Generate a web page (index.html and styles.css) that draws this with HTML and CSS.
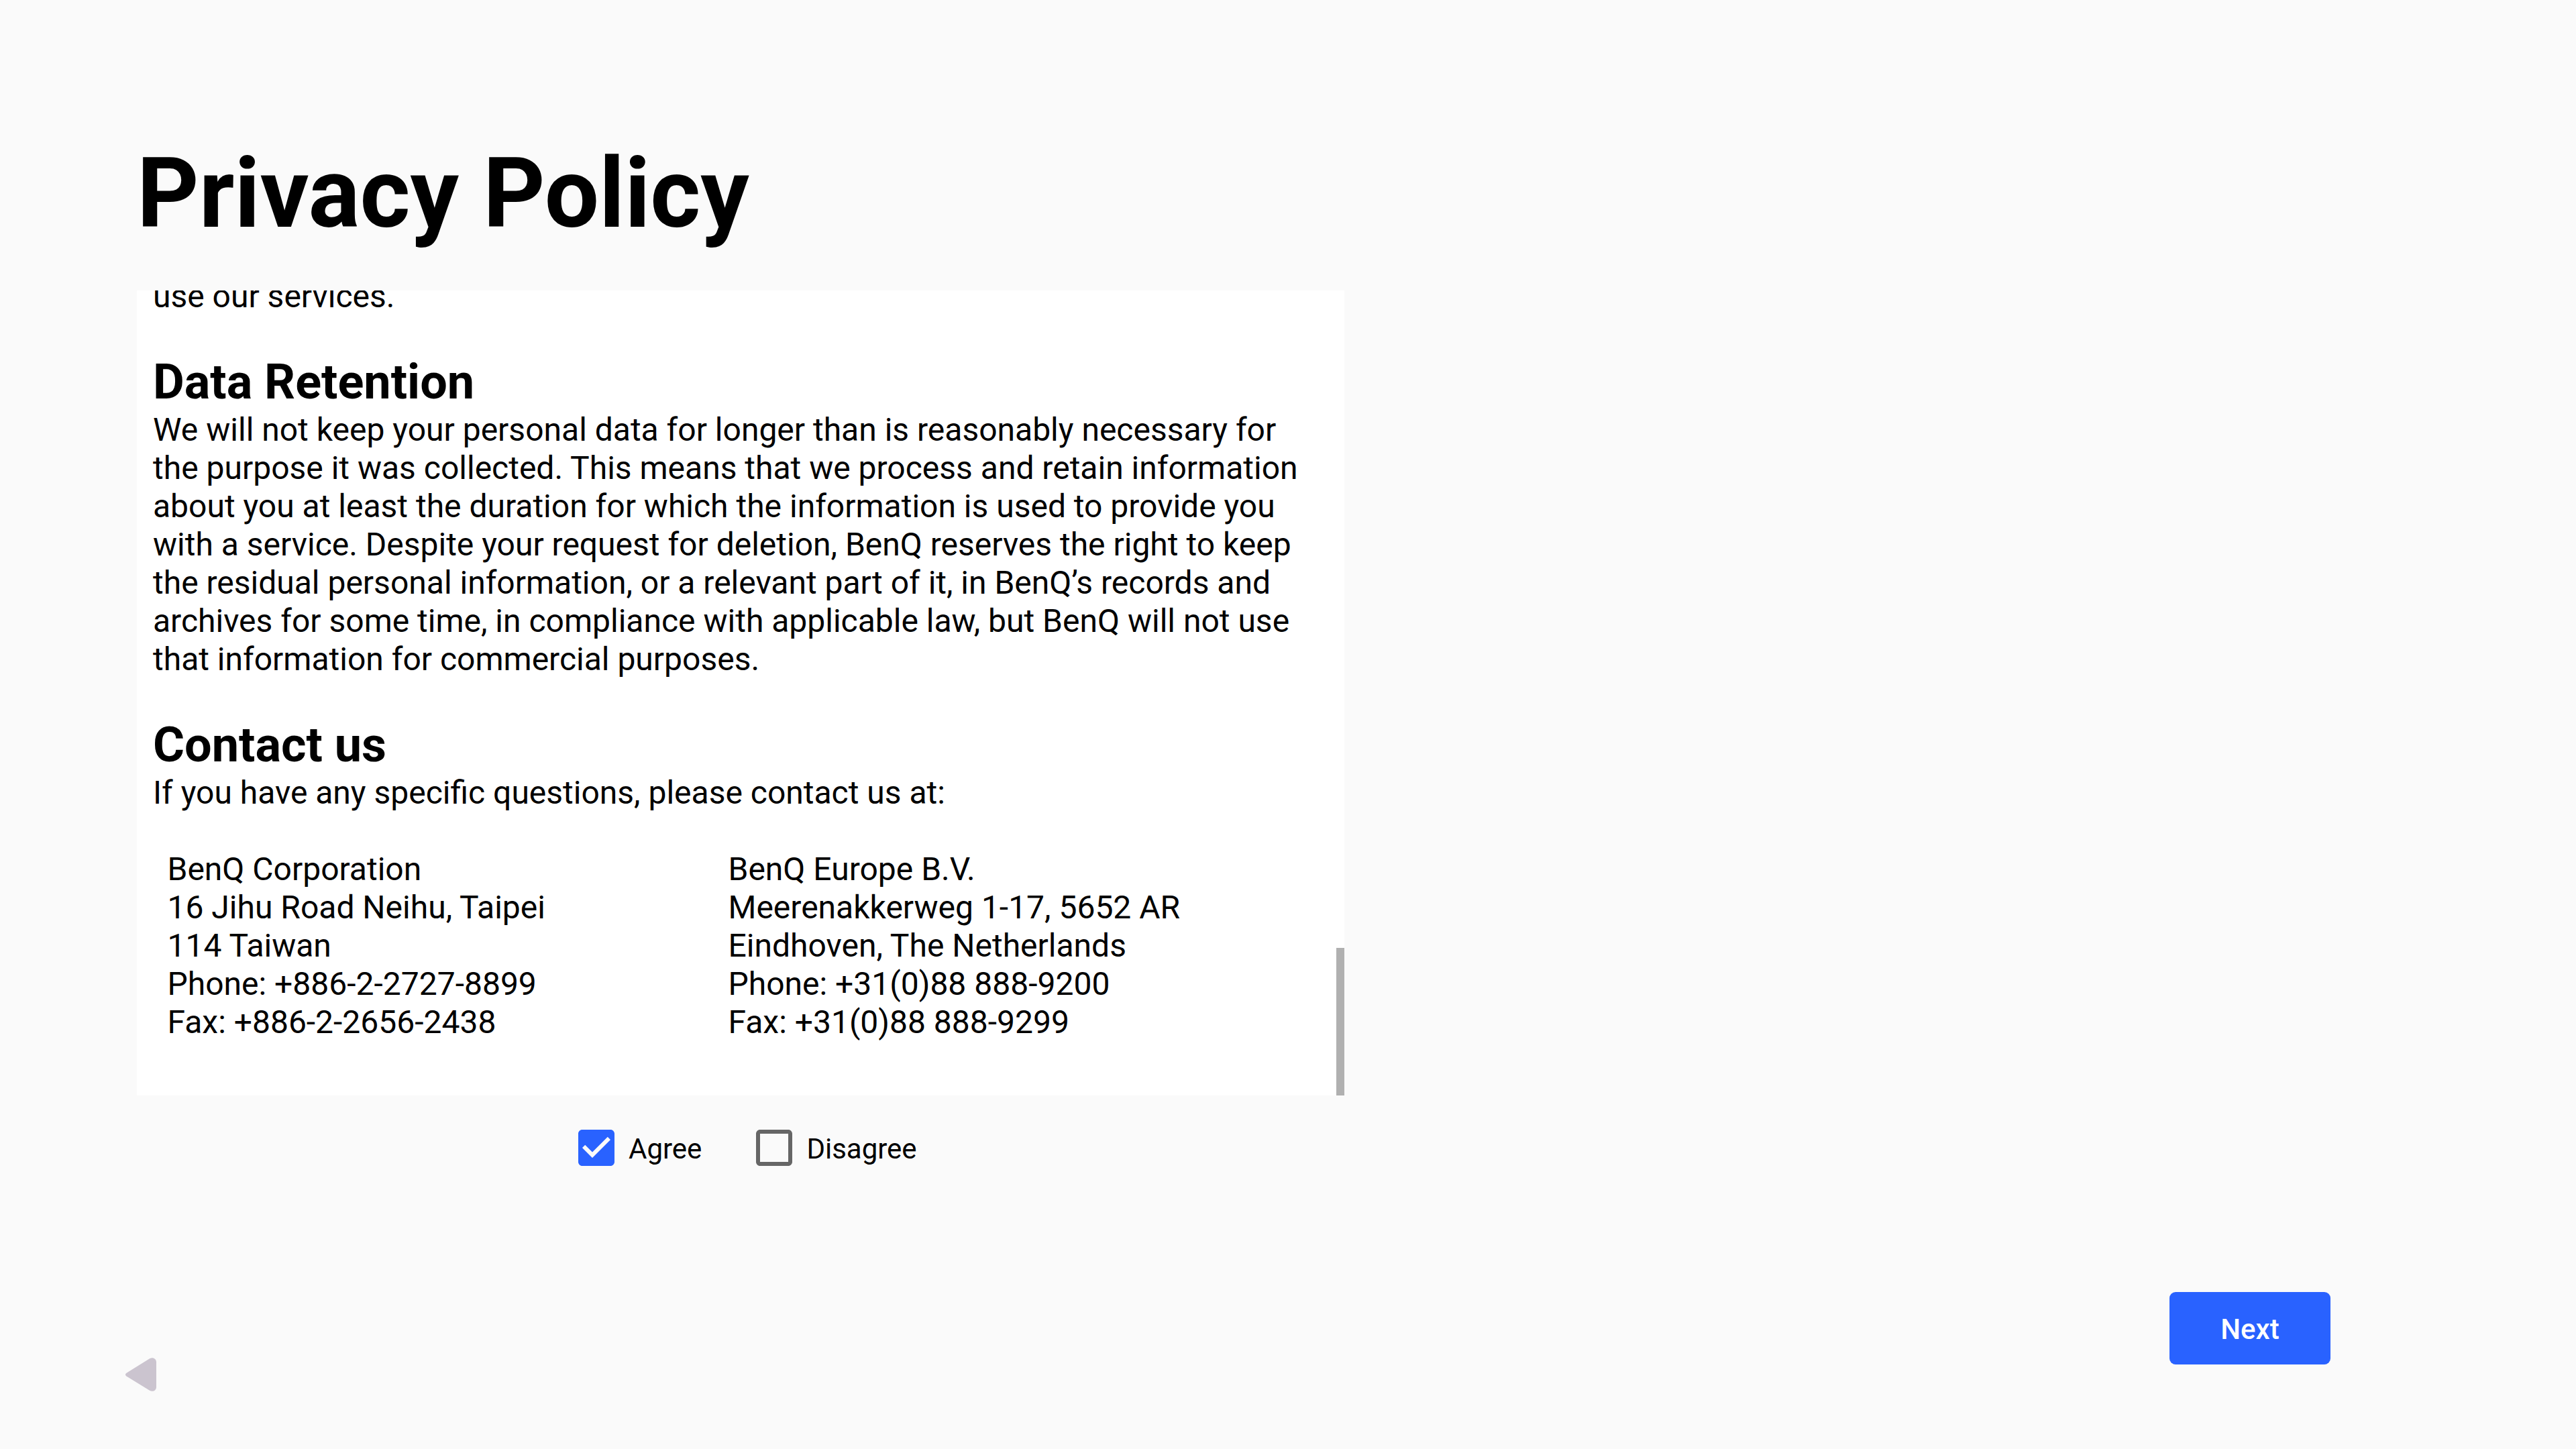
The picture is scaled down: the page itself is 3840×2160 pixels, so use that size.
FILE: index.html
```html
<!DOCTYPE html>
<html lang="en">
<head>
    <meta charset="UTF-8">
    <meta name="viewport" content="width=device-width, initial-scale=1.0">
    <title>Privacy Policy</title>
    <link rel="stylesheet" href="styles.css">
</head>
<body>

    <div class="container">
        <h1 class="title">Privacy Policy</h1>

        <div class="policy">
            <div class="policy-content">
                <p>use our services.</p>

                <h2>Data Retention</h2>
                <p>
                    We will not keep your personal data for longer than is reasonably necessary for<br>
                    the purpose it was collected. This means that we process and retain information<br>
                    about you at least the duration for which the information is used to provide you<br>
                    with a service. Despite your request for deletion, BenQ reserves the right to keep<br>
                    the residual personal information, or a relevant part of it, in BenQ’s records and<br>
                    archives for some time, in compliance with applicable law, but BenQ will not use<br>
                    that information for commercial purposes.
                </p>

                <h2>Contact us</h2>
                <p>If you have any specific questions, please contact us at:</p>

                <div class="offices">
                    <div class="office">
                        BenQ Corporation<br>
                        16 Jihu Road Neihu, Taipei<br>
                        114 Taiwan<br>
                        Phone: +886-2-2727-8899<br>
                        Fax: +886-2-2656-2438
                    </div>
                    <div class="office">
                        BenQ Europe B.V.<br>
                        Meerenakkerweg 1-17, 5652 AR<br>
                        Eindhoven, The Netherlands<br>
                        Phone: +31(0)88 888-9200<br>
                        Fax: +31(0)88 888-9299
                    </div>
                </div>
            </div>
            <div class="scroll-thumb"></div>
        </div>

        <div class="choices">
            <div class="choice" role="checkbox" aria-checked="true">
                <svg class="check-icon checked" viewBox="0 0 24 24">
                    <path d="M19 3H5c-1.11 0-2 .9-2 2v14c0 1.1.89 2 2 2h14c1.11 0 2-.9 2-2V5c0-1.1-.89-2-2-2zm-9 14l-5-5 1.41-1.41L10 14.17l7.59-7.59L19 8l-9 9z"/>
                </svg>
                <span class="choice-label">Agree</span>
            </div>
            <div class="choice" role="checkbox" aria-checked="false">
                <svg class="check-icon" viewBox="0 0 24 24">
                    <path d="M19 5v14H5V5h14m0-2H5c-1.1 0-2 .9-2 2v14c0 1.1.9 2 2 2h14c1.1 0 2-.9 2-2V5c0-1.1-.9-2-2-2z"/>
                </svg>
                <span class="choice-label">Disagree</span>
            </div>
        </div>

        <div class="footer">
            <button class="back" aria-label="Back">
                <svg class="back-icon" viewBox="0 0 46 50">
                    <path d="M2.3 22.3L36 1.2C40.5 -1.4 46 1 46 6.5V43.5C46 49 40.5 51.4 36 48.8L2.3 27.9C-.8 26 -.8 24.2 2.3 22.3z"/>
                </svg>
            </button>
            <button class="next">Next</button>
        </div>
    </div>

</body>
</html>
```

FILE: styles.css
```css
body {
    font-family: Roboto, sans-serif;
    background-color: #fafafa;
    color: #000;
    margin: 0;
    padding: 0;
}
.container {
    display: flex;
    flex-direction: column;
    box-sizing: border-box;
    width: 3840px;
    height: 2160px;
    padding: 204px 366px 86px 187px;
    overflow: hidden;
}
.title {
    margin: 0 0 60px 17px;
    font-size: 144px;
    line-height: 169px;
    font-weight: bold;
}
.policy {
    position: relative;
    box-sizing: border-box;
    width: 1800px;
    height: 1200px;
    margin-left: 17px;
    padding: 0 24px;
    background-color: #fff;
    overflow: hidden;
}
.policy-content {
    margin-top: -20px; /* scrolled to the end */
    font-size: 48px;
    line-height: 57px;
    white-space: nowrap;
}
.policy-content p {
    margin: 0;
}
.policy-content h2 {
    margin: 57px 0 0;
    font-size: 72px;
    line-height: 85px;
    font-weight: bold;
}
.offices {
    display: grid;
    grid-template-columns: 836px 1fr;
    margin-top: 57px;
    padding-left: 21.5px;
}
.scroll-thumb {
    position: absolute;
    right: 0;
    bottom: 0;
    width: 12px;
    height: 220px;
    background-color: #b0b0b0;
}
.choices {
    display: flex;
    gap: 72px;
    margin: 42px 0 0 666px;
}
.choice {
    display: flex;
    align-items: center;
    gap: 12px;
    font-size: 42px;
    line-height: 50px;
}
.choice-label {
    padding-top: 3px;
}
.check-icon {
    width: 72px;
    height: 72px;
    fill: #666;
}
.check-icon.checked {
    fill: #2962ff;
}
.footer {
    display: flex;
    justify-content: space-between;
    align-items: flex-end;
    margin-top: auto;
}
.back, .next {
    padding: 0;
    border: none;
    cursor: pointer;
}
.back {
    background: none;
}
.back-icon {
    display: block;
    width: 46px;
    height: 50px;
    fill: #cbc4cf;
}
.next {
    width: 240px;
    height: 108px;
    margin-bottom: 40px;
    padding-top: 2px;
    border-radius: 9px;
    background-color: #2962ff;
    color: #fff;
    font-family: inherit;
    font-size: 42px;
    font-weight: 500;
}
```
